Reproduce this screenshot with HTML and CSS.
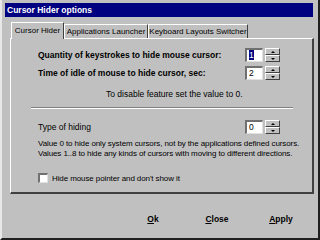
FILE: index.html
```html
<!DOCTYPE html>
<html lang="en">
<head>
    <meta charset="UTF-8">
    <title>Cursor Hider options</title>
    <link rel="stylesheet" href="styles.css">
</head>
<body>
    <div class="window">
        <div class="titlebar">Cursor Hider options</div>

        <div class="tabs">
            <div class="tab active tab-hider">Cursor Hider</div>
            <div class="tab tab-launcher">Applications Launcher</div>
            <div class="tab tab-switcher">Keyboard Layouts Switcher</div>
        </div>

        <div class="panel">
            <div class="row bold">
                <span>Quantity of keystrokes to hide mouse cursor:</span>
                <div class="spinner">
                    <div class="edit"><span class="selected">1</span></div>
                    <div class="arrows">
                        <div class="arrow up"></div>
                        <div class="arrow down"></div>
                    </div>
                </div>
            </div>
            <div class="row bold second">
                <span>Time of idle of mouse to hide cursor, sec:</span>
                <div class="spinner">
                    <div class="edit">2</div>
                    <div class="arrows">
                        <div class="arrow up"></div>
                        <div class="arrow down"></div>
                    </div>
                </div>
            </div>
            <div class="note">To disable feature set the value to 0.</div>

            <div class="separator"></div>

            <div class="row type">
                <span>Type of hiding</span>
                <div class="spinner">
                    <div class="edit">0</div>
                    <div class="arrows">
                        <div class="arrow up"></div>
                        <div class="arrow down"></div>
                    </div>
                </div>
            </div>
            <div class="info">
                <div>Value 0 to hide only system cursors, not by the applications defined cursors.</div>
                <div>Values 1..8 to hide any kinds of cursors with moving to different directions.</div>
            </div>

            <label class="check">
                <span class="box"></span>
                <span>Hide mouse pointer and don't show it</span>
            </label>
        </div>

        <div class="buttons">
            <button><u>O</u>k</button>
            <button><u>C</u>lose</button>
            <button><u>A</u>pply</button>
        </div>
    </div>
</body>
</html>
```

FILE: styles.css
```css
* {
    box-sizing: border-box;
}

body {
    margin: 0;
    font-family: 'Liberation Sans', Arial, sans-serif;
    font-size: 8.5px;
    color: #000;
}

.window {
    width: 320px;
    height: 240px;
    padding: 3px 5px 0 5px;
    background-color: #c0c0c0;
    border-right: 2px solid #202020;
    border-bottom: 2px solid #202020;
    border-left: 2px solid #e8e8e8;
    display: flex;
    flex-direction: column;
}

.titlebar {
    height: 14px;
    margin-left: -2px;
    padding-left: 2px;
    background-color: #000080;
    color: #fff;
    font-weight: bold;
    font-size: 8.5px;
    line-height: 14px;
}

.tabs {
    display: flex;
    align-items: flex-end;
    height: 21px;
    padding-left: 4px;
    font-size: 8px;
}

.tab {
    height: 14px;
    line-height: 13px;
    text-align: center;
    white-space: nowrap;
    border-top: 1px solid #fff;
    border-left: 1px solid #fff;
    border-right: 1px solid #404040;
}

.tab.active {
    height: 17px;
    line-height: 15px;
    margin-bottom: -1px;
    background-color: #c0c0c0;
    position: relative;
    z-index: 1;
}

.tab-hider {
    width: 53px;
}

.tab-launcher {
    width: 84px;
}

.tab-switcher {
    width: 100px;
}

.panel {
    height: 156px;
    margin-left: 3px;
    margin-right: -1px;
    padding: 9px 32px 0 27px;
    border-top: 1px solid #fff;
    border-left: 1px solid #fff;
    border-right: 2px solid #404040;
    border-bottom: 2px solid #404040;
}

.row {
    display: flex;
    justify-content: space-between;
    align-items: center;
    height: 14px;
}

.bold {
    font-weight: bold;
}

.row.second {
    margin-top: 4px;
}

.spinner {
    display: flex;
    gap: 2px;
    font-weight: normal;
}

.edit {
    width: 18px;
    height: 14px;
    padding-left: 2px;
    line-height: 11px;
    background-color: #fff;
    border-top: 2px solid #707070;
    border-left: 2px solid #707070;
    border-bottom: 1px solid #e0e0e0;
    border-right: 1px solid #e0e0e0;
}

.selected {
    background-color: #000080;
    color: #fff;
}

.arrows {
    width: 15px;
    height: 14px;
    display: flex;
    flex-direction: column;
}

.arrow {
    flex: 1;
    border-top: 1px solid #fff;
    border-left: 1px solid #fff;
    border-right: 1px solid #404040;
    border-bottom: 1px solid #404040;
    display: flex;
    justify-content: center;
    align-items: center;
}

.arrow::after {
    content: '';
    border-left: 2px solid transparent;
    border-right: 2px solid transparent;
}

.up::after {
    border-bottom: 2px solid #000;
}

.down::after {
    border-top: 2px solid #000;
}

.note {
    margin: 9px 0 0 68px;
    line-height: 10px;
}

.separator {
    margin: 8px -13px 0 -7px;
    border-top: 1px solid #808080;
    border-bottom: 1px solid #fff;
}

.row.type {
    margin-top: 11px;
}

.info {
    margin: 5px -16px 0 0;
    line-height: 10px;
    white-space: nowrap;
    font-size: 8px;
    letter-spacing: -0.1px;
}

.check {
    display: flex;
    align-items: center;
    gap: 4px;
    margin-top: 14px;
    height: 10px;
    font-size: 8px;
    letter-spacing: -0.1px;
}

.box {
    width: 10px;
    height: 10px;
    background-color: #fff;
    border-top: 2px solid #707070;
    border-left: 2px solid #707070;
    border-bottom: 1px solid #e0e0e0;
    border-right: 1px solid #e0e0e0;
}

.buttons {
    display: flex;
    justify-content: flex-end;
    margin-top: 13px;
}

button {
    width: 64px;
    height: 24px;
    border: none;
    background: transparent;
    font-family: 'Liberation Sans', Arial, sans-serif;
    font-size: 8.5px;
    font-weight: bold;
    color: #000;
    padding: 0;
}
```
